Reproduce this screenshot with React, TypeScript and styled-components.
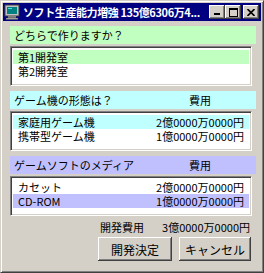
import React from 'react';
import styled, { createGlobalStyle } from 'styled-components';

const GlobalStyle = createGlobalStyle`
  html, body {
    margin: 0;
    padding: 0;
    background: #d4d0c8;
  }
  body {
    font-family: 'Noto Sans CJK JP', 'Liberation Sans', sans-serif;
  }
`;

const Window = styled.div`
  width: 264px;
  height: 273px;
  box-sizing: border-box;
  background: #d4d0c8;
  border: 1px solid;
  border-color: #d4d0c8 #404040 #404040 #d4d0c8;
  box-shadow: inset 1px 1px #fff, inset -1px -1px #808080;
  padding: 2px;
  display: flex;
  flex-direction: column;
`;

const TitleBar = styled.div`
  height: 18px;
  background: #000080;
  color: #fff;
  display: flex;
  align-items: center;
  padding: 0 2px 0 1px;
  gap: 3px;
`;

const TitleText = styled.div`
  flex: 1;
  font-size: 11px;
  font-weight: bold;
  letter-spacing: -0.4px;
  line-height: 18px;
  white-space: nowrap;
`;

const CaptionButtons = styled.div`
  display: flex;
  align-items: center;
`;

const CaptionButton = styled.div<{ gapLeft?: boolean }>`
  width: 16px;
  height: 14px;
  box-sizing: border-box;
  margin-left: ${p => (p.gapLeft ? '2px' : '0')};
  background: #d4d0c8;
  box-shadow: inset -1px -1px #404040, inset 1px 1px #fff, inset -2px -2px #808080;
  display: flex;
  align-items: center;
  justify-content: center;
`;

const Content = styled.div`
  flex: 1;
  display: flex;
  flex-direction: column;
  padding: 5px 5px 0 7px;
`;

const Header = styled.div<{ bg: string }>`
  height: 18px;
  background: ${p => p.bg};
  display: flex;
  align-items: center;
  font-size: 11px;
  color: #000;
  padding-left: 4px;
`;

const HeaderLabel = styled.div`
  flex: 1;
`;

const HeaderCost = styled.div`
  width: 90px;
  margin-right: 11px;
  text-align: center;
`;

const ListBox = styled.div<{ gapAfter?: boolean }>`
  height: 40px;
  margin: 2px 4px ${p => (p.gapAfter ? '5px' : '0')} 0;
  box-sizing: border-box;
  background: #fff;
  border: 1px solid;
  border-color: #808080 #fff #fff #808080;
  box-shadow: inset 1px 1px #404040, inset -1px -1px #d4d0c8;
  padding: 3px 2px 0 2px;
`;

const Row = styled.div<{ selected?: string }>`
  height: 14px;
  display: flex;
  align-items: center;
  font-size: 11px;
  line-height: 14px;
  color: #000;
  background: ${p => p.selected || 'transparent'};
  padding: 0 5px 0 5px;
`;

const RowName = styled.div`
  flex: 1;
`;

const RowCost = styled.div`
  text-align: right;
`;

const TotalRow = styled.div`
  margin-top: 4px;
  height: 14px;
  display: flex;
  justify-content: flex-end;
  align-items: center;
  gap: 18px;
  font-size: 11px;
  padding-right: 6px;
`;

const ButtonRow = styled.div`
  margin-top: 3px;
  display: flex;
  justify-content: flex-end;
  gap: 7px;
  padding-right: 5px;
`;

const PushButton = styled.div<{ w: number }>`
  width: ${p => p.w}px;
  height: 24px;
  box-sizing: border-box;
  background: #d4d0c8;
  box-shadow: inset -1px -1px #404040, inset 1px 1px #fff, inset -2px -2px #808080;
  display: flex;
  align-items: center;
  justify-content: center;
  font-size: 12px;
  color: #000;
`;

const AppIcon = () => (
  <svg width="16" height="16" viewBox="0 0 16 16">
    <rect x="1" y="1" width="14" height="11" fill="#c0c0c0" stroke="#404040" strokeWidth="1" />
    <rect x="3" y="3" width="10" height="7" fill="#008080" />
    <rect x="4" y="4" width="4" height="1" fill="#40e0e0" />
    <rect x="4" y="12" width="8" height="2" fill="#808080" />
    <rect x="2" y="14" width="12" height="1.5" fill="#c0c0c0" stroke="#404040" strokeWidth="0.5" />
  </svg>
);

const MinGlyph = () => (
  <svg width="8" height="8" viewBox="0 0 8 8">
    <rect x="1" y="5" width="6" height="2" fill="#000" />
  </svg>
);

const MaxGlyph = () => (
  <svg width="9" height="9" viewBox="0 0 9 9">
    <rect x="0.5" y="0.5" width="8" height="8" fill="none" stroke="#000" strokeWidth="1" />
    <rect x="0" y="0" width="9" height="2" fill="#000" />
  </svg>
);

const CloseGlyph = () => (
  <svg width="8" height="7" viewBox="0 0 8 7">
    <path d="M0.5 0 L7.5 7 M7.5 0 L0.5 7" stroke="#000" strokeWidth="1.6" />
  </svg>
);

export default function App() {
  return (
    <>
      <GlobalStyle />
      <Window>
        <TitleBar>
          <AppIcon />
          <TitleText>ソフト生産能力増強 135億6306万4...</TitleText>
          <CaptionButtons>
            <CaptionButton><MinGlyph /></CaptionButton>
            <CaptionButton><MaxGlyph /></CaptionButton>
            <CaptionButton gapLeft><CloseGlyph /></CaptionButton>
          </CaptionButtons>
        </TitleBar>
        <Content>
          <Header bg="#c0ffc0">
            <HeaderLabel>どちらで作りますか？</HeaderLabel>
          </Header>
          <ListBox gapAfter>
            <Row selected="#c0ffc0"><RowName>第1開発室</RowName></Row>
            <Row><RowName>第2開発室</RowName></Row>
          </ListBox>

          <Header bg="#c0ffff">
            <HeaderLabel>ゲーム機の形態は？</HeaderLabel>
            <HeaderCost>費用</HeaderCost>
          </Header>
          <ListBox gapAfter>
            <Row selected="#c0ffff">
              <RowName>家庭用ゲーム機</RowName>
              <RowCost>2億0000万0000円</RowCost>
            </Row>
            <Row>
              <RowName>携帯型ゲーム機</RowName>
              <RowCost>1億0000万0000円</RowCost>
            </Row>
          </ListBox>

          <Header bg="#c0c0ff">
            <HeaderLabel>ゲームソフトのメディア</HeaderLabel>
            <HeaderCost>費用</HeaderCost>
          </Header>
          <ListBox>
            <Row>
              <RowName>カセット</RowName>
              <RowCost>2億0000万0000円</RowCost>
            </Row>
            <Row selected="#c0c0ff">
              <RowName>CD-ROM</RowName>
              <RowCost>1億0000万0000円</RowCost>
            </Row>
          </ListBox>

          <TotalRow>
            <span>開発費用</span>
            <span>3億0000万0000円</span>
          </TotalRow>
          <ButtonRow>
            <PushButton w={74}>開発決定</PushButton>
            <PushButton w={72}>キャンセル</PushButton>
          </ButtonRow>
        </Content>
      </Window>
    </>
  );
}
